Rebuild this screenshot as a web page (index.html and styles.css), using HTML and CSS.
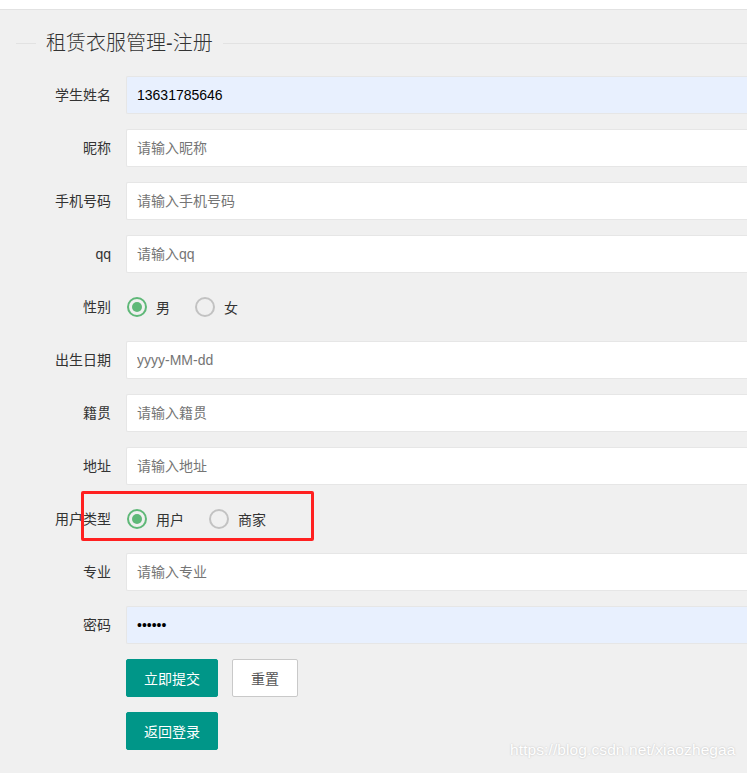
FILE: index.html
```html
<!DOCTYPE html>
<html lang="zh-CN">
<head>
<meta charset="utf-8">
<title>租赁衣服管理-注册</title>
<link rel="stylesheet" href="styles.css">
</head>
<body>
<div class="topbar"></div>
<div class="page">
  <div class="legend-row">
    <span class="legend-line short"></span>
    <span class="legend">租赁衣服管理-注册</span>
    <span class="legend-line"></span>
  </div>
  <form class="form">
    <div class="item">
      <label class="label">学生姓名</label>
      <div class="block"><input class="input filled" type="text" value="13631785646"></div>
    </div>
    <div class="item">
      <label class="label">昵称</label>
      <div class="block"><input class="input" type="text" placeholder="请输入昵称"></div>
    </div>
    <div class="item">
      <label class="label">手机号码</label>
      <div class="block"><input class="input" type="text" placeholder="请输入手机号码"></div>
    </div>
    <div class="item">
      <label class="label">qq</label>
      <div class="block"><input class="input" type="text" placeholder="请输入qq"></div>
    </div>
    <div class="item">
      <label class="label">性别</label>
      <div class="block radios">
        <span class="radio"><i class="dot on"></i><span>男</span></span>
        <span class="radio"><i class="dot"></i><span>女</span></span>
      </div>
    </div>
    <div class="item">
      <label class="label">出生日期</label>
      <div class="block"><input class="input" type="text" placeholder="yyyy-MM-dd"></div>
    </div>
    <div class="item">
      <label class="label">籍贯</label>
      <div class="block"><input class="input" type="text" placeholder="请输入籍贯"></div>
    </div>
    <div class="item">
      <label class="label">地址</label>
      <div class="block"><input class="input" type="text" placeholder="请输入地址"></div>
    </div>
    <div class="item">
      <label class="label">用户类型</label>
      <div class="block radios">
        <span class="radio"><i class="dot on"></i><span>用户</span></span>
        <span class="radio"><i class="dot"></i><span>商家</span></span>
      </div>
      <div class="mark"></div>
    </div>
    <div class="item">
      <label class="label">专业</label>
      <div class="block"><input class="input" type="text" placeholder="请输入专业"></div>
    </div>
    <div class="item">
      <label class="label">密码</label>
      <div class="block"><input class="input filled" type="password" value="123456"></div>
    </div>
    <div class="item">
      <div class="block buttons">
        <button type="button" class="btn">立即提交</button>
        <button type="button" class="btn plain">重置</button>
      </div>
    </div>
    <div class="item">
      <div class="block buttons">
        <button type="button" class="btn">返回登录</button>
      </div>
    </div>
  </form>
  <div class="watermark">https://blog.csdn.net/xiaozhegaa</div>
</div>
</body>
</html>
```
FILE: styles.css
```css
html, body {
  margin: 0;
  padding: 0;
  height: 100%;
  overflow: hidden;
  background: #f0f0f0;
  font-family: "Liberation Sans", "Noto Sans CJK SC", sans-serif;
  font-size: 14px;
  color: #333;
}
.topbar {
  height: 9px;
  background: #fff;
  border-bottom: 1px solid #e2e2e2;
}
.page {
  position: relative;
  box-sizing: border-box;
  padding: 21px 0 0 16px;
  width: 100%;
  height: 763px;
}
.legend-row {
  display: flex;
  align-items: center;
  height: 24px;
}
.legend-line {
  flex: 1;
  height: 1px;
  background: #e2e2e2;
}
.legend-line.short {
  flex: 0 0 20px;
}
.legend {
  padding: 0 10px;
  font-size: 20px;
  line-height: 24px;
  font-weight: 300;
  color: #333;
}
.form {
  margin-top: 21px;
}
.item {
  position: relative;
  display: flex;
  height: 38px;
  margin-bottom: 15px;
}
.label {
  width: 80px;
  padding: 9px 15px;
  line-height: 20px;
  text-align: right;
  flex: 0 0 auto;
}
.block {
  flex: 1;
  min-width: 0;
  display: flex;
  align-items: center;
}
.item > .block:first-child {
  margin-left: 110px;
}
.input {
  box-sizing: border-box;
  width: 100%;
  height: 38px;
  border: 1px solid #e6e6e6;
  border-right: none;
  border-radius: 2px 0 0 2px;
  background: #fff;
  padding: 0 10px;
  font-family: inherit;
  font-size: 14px;
  color: #000;
  outline: none;
}
.input::placeholder {
  color: #757575;
}
.input.filled {
  background: #e8f0fe;
}
.radios {
  gap: 24px;
}
.radio {
  display: inline-flex;
  align-items: center;
  margin-left: 1px;
}
.dot {
  box-sizing: border-box;
  width: 20px;
  height: 20px;
  border: 2px solid #c2c2c2;
  border-radius: 50%;
  margin-right: 9px;
  display: inline-flex;
  align-items: center;
  justify-content: center;
}
.dot.on {
  border-color: #5fb878;
}
.dot.on::after {
  content: "";
  width: 10px;
  height: 10px;
  border-radius: 50%;
  background: #5fb878;
}
.buttons {
  gap: 14px;
}
.btn {
  box-sizing: border-box;
  height: 38px;
  width: 92px;
  padding: 0;
  white-space: nowrap;
  border: 1px solid #009688;
  border-radius: 2px;
  background: #009688;
  color: #fff;
  font-family: inherit;
  font-size: 14px;
}
.btn.plain {
  width: 66px;
  background: #fff;
  color: #555;
  border-color: #c9c9c9;
}
.mark {
  position: absolute;
  left: 65px;
  top: -9px;
  width: 227px;
  height: 44px;
  border: 3px solid #ff2020;
  border-radius: 2px;
}
.watermark {
  position: absolute;
  left: 510px;
  top: 731px;
  font-size: 15.5px;
  color: #fff;
  text-shadow: 0 0 2px rgba(0, 0, 0, 0.22);
  letter-spacing: 0.1px;
}
```
